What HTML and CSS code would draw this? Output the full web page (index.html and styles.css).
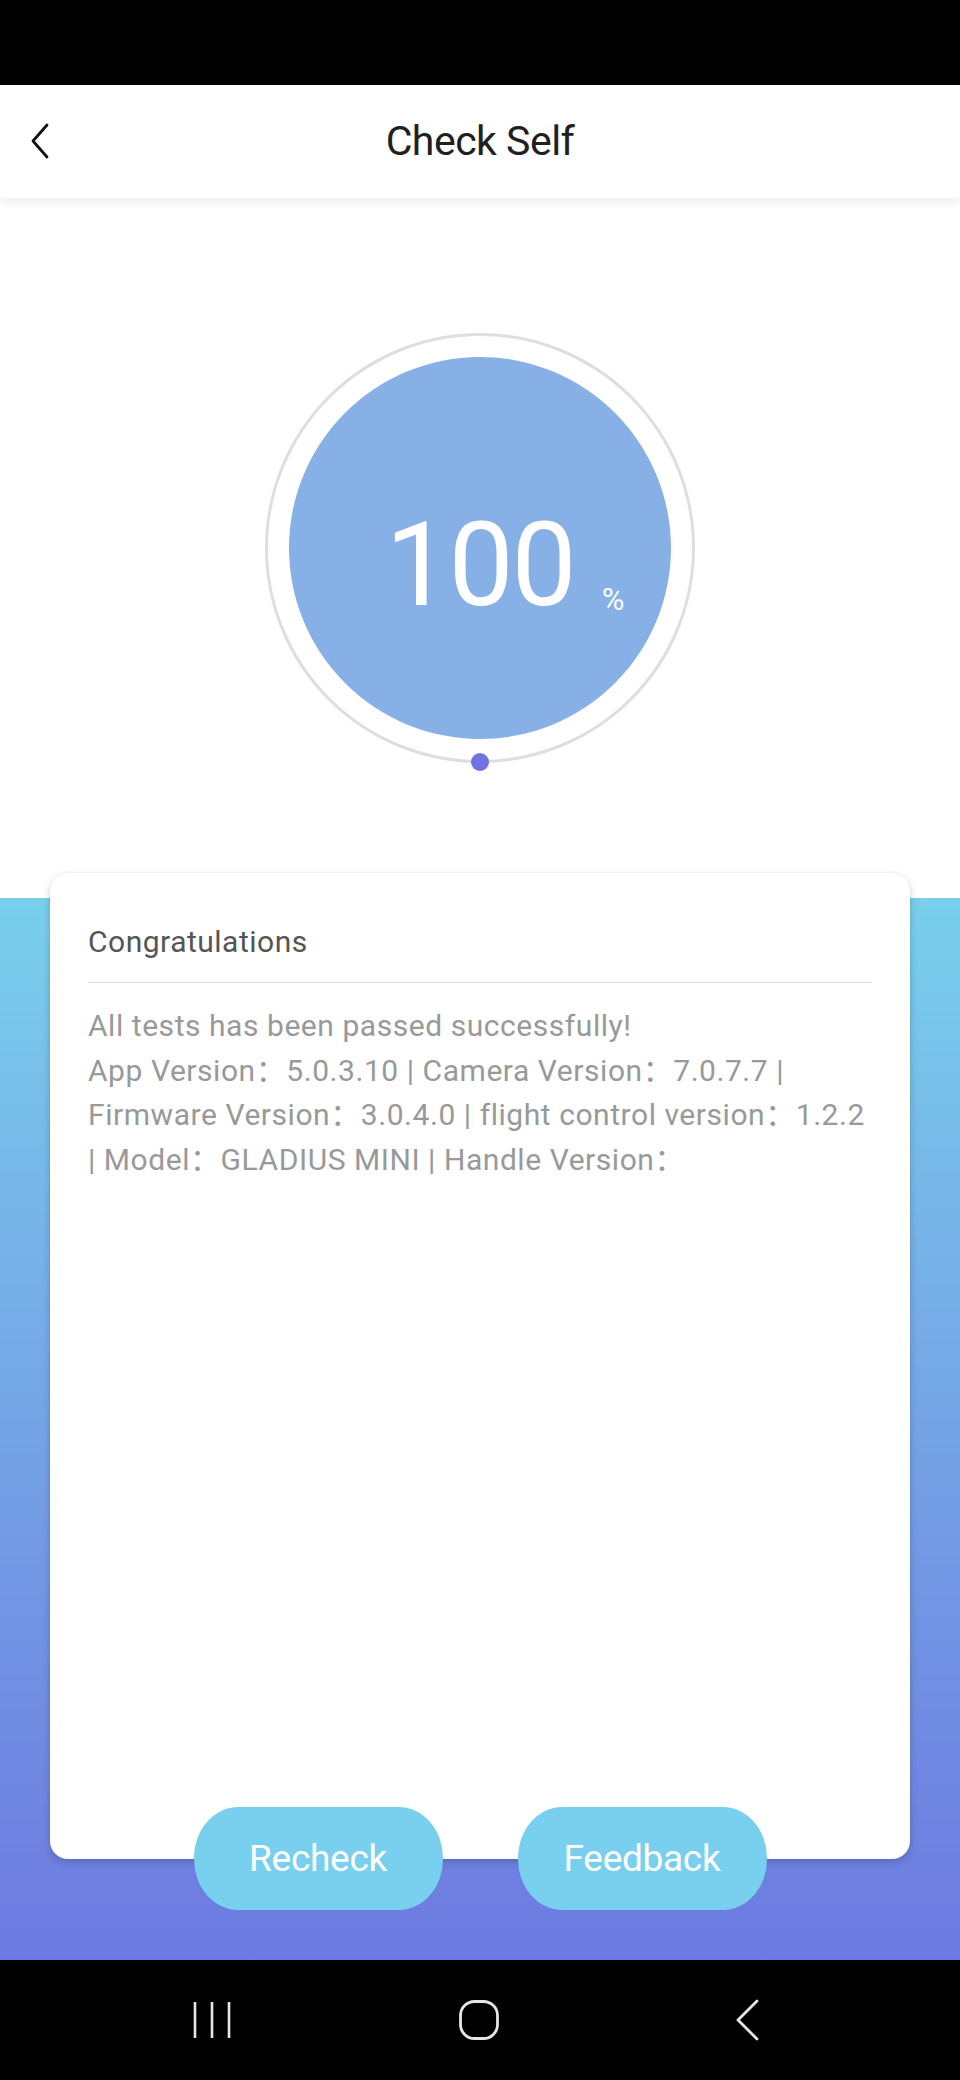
FILE: index.html
```html
<!DOCTYPE html>
<html lang="en">
<head>
<meta charset="utf-8">
<title>Check Self</title>
<link rel="stylesheet" href="styles.css">
</head>
<body>
<div class="phone">
  <div class="statusbar"></div>
  <header class="topbar">
    <button class="back" aria-label="Back">
      <svg width="22" height="36" viewBox="0 0 22 36"><path d="M18 2 L4 18 L18 34" fill="none" stroke="#111" stroke-width="2.8" stroke-linecap="round" stroke-linejoin="round"/></svg>
    </button>
    <h1 class="title">Check Self</h1>
  </header>
  <section class="hero">
    <div class="ring">
      <div class="disc">
        <span class="value">100<span class="unit">%</span></span>
      </div>
      <span class="knob"></span>
    </div>
  </section>
  <section class="lower">
    <div class="card">
      <div class="card-head">Congratulations</div>
      <div class="card-body">
        All tests has been passed successfully!<br>
        App Version：5.0.3.10 | Camera Version：7.0.7.7 |<br>
        Firmware Version：3.0.4.0 | flight control version：1.2.2<br>
        | Model：GLADIUS MINI | Handle Version：
      </div>
    </div>
    <div class="actions">
      <button class="pill">Recheck</button>
      <button class="pill">Feedback</button>
    </div>
  </section>
  <nav class="navbar">
    <svg class="nav-icon" width="40" height="40" viewBox="0 0 40 40"><path d="M3 2 V38 M20 2 V38 M37 2 V38" stroke="#e6e6e6" stroke-width="2.6" fill="none"/></svg>
    <svg class="nav-icon" width="42" height="42" viewBox="0 0 42 42"><rect x="2.5" y="2.5" width="37" height="37" rx="14" ry="14" fill="none" stroke="#e6e6e6" stroke-width="2.8"/></svg>
    <svg class="nav-icon" width="30" height="42" viewBox="0 0 30 42"><path d="M25 2 L6 21 L25 40" fill="none" stroke="#e6e6e6" stroke-width="2.8" stroke-linecap="round" stroke-linejoin="round"/></svg>
  </nav>
</div>
</body>
</html>
```

FILE: styles.css
```css
* { box-sizing: border-box; }
html, body { margin: 0; padding: 0; }
body {
  width: 960px;
  height: 2080px;
  font-family: Roboto, "Noto Sans", "Noto Sans CJK SC", sans-serif;
  background: #fff;
  overflow: hidden;
}
.phone {
  width: 960px;
  height: 2080px;
  display: flex;
  flex-direction: column;
}
.statusbar {
  height: 85px;
  background: #000;
  flex: none;
}
.topbar {
  height: 113px;
  flex: none;
  background: #fff;
  display: flex;
  align-items: center;
  justify-content: center;
  position: relative;
  box-shadow: 0 2px 12px rgba(0,0,0,0.10);
  z-index: 2;
}
.back {
  position: absolute;
  left: 28px;
  top: 38px;
  border: 0;
  background: none;
  padding: 0;
  width: 24px;
  height: 38px;
}
.title {
  margin: 0;
  font-size: 41px;
  font-weight: 400;
  color: #202020;
  letter-spacing: -0.5px;
  padding-bottom: 2px;
}
.hero {
  height: 675px;
  flex: none;
  display: flex;
  justify-content: center;
  padding-top: 135px;
}
.ring {
  width: 430px;
  height: 430px;
  border-radius: 50%;
  border: 3px solid #dedede;
  display: flex;
  align-items: center;
  justify-content: center;
  position: relative;
}
.disc {
  width: 382px;
  height: 382px;
  border-radius: 50%;
  background: #87b0e6;
  display: flex;
  align-items: center;
  justify-content: center;
}
.value {
  position: relative;
  color: #fff;
  font-size: 116px;
  font-weight: 400;
  line-height: 1;
  letter-spacing: -2px;
  margin-top: 34px;
}
.unit {
  position: absolute;
  left: 100%;
  bottom: 8px;
  margin-left: 27px;
  font-size: 31px;
  letter-spacing: 0;
  line-height: 1;
}
.knob {
  position: absolute;
  left: 50%;
  bottom: -11px;
  width: 18px;
  height: 18px;
  margin-left: -9px;
  border-radius: 50%;
  background: #6d74e2;
}
.lower {
  flex: 1;
  display: flex;
  flex-direction: column;
  align-items: center;
  background: linear-gradient(to bottom, #fff 0, #fff 25px, #79cfec 25px, #75a9e7 45%, #6d79e0 100%);
}
.card {
  width: 860px;
  height: 986px;
  background: #fff;
  border-radius: 18px;
  box-shadow: 0 3px 8px rgba(0,0,0,0.18), 0 0 2px rgba(0,0,0,0.08);
  padding: 49px 38px 0;
}
.card-head {
  font-size: 30px;
  line-height: 40px;
  letter-spacing: 0.5px;
  color: #555;
  padding-bottom: 20px;
  border-bottom: 1px solid #dcdcdc;
}
.card-body {
  padding-top: 21px;
  font-size: 30px;
  line-height: 44.5px;
  letter-spacing: 0.55px;
  color: #999;
  white-space: nowrap;
}
.actions {
  display: flex;
  gap: 75px;
  margin-top: -52px;
  z-index: 1;
}
.pill {
  width: 249px;
  height: 103px;
  border: 0;
  border-radius: 44px / 51px;
  background: #79d0ee;
  color: #fff;
  font-family: Roboto, "Noto Sans", sans-serif;
  font-size: 37px;
  letter-spacing: -0.3px;
  padding: 0;
}
.navbar {
  height: 120px;
  flex: none;
  background: #000;
  display: flex;
  align-items: center;
  justify-content: flex-start;
  padding-left: 192px;
}
.nav-icon:nth-child(1) { margin-right: 226px; }
.nav-icon:nth-child(2) { margin-right: 232px; }
```
